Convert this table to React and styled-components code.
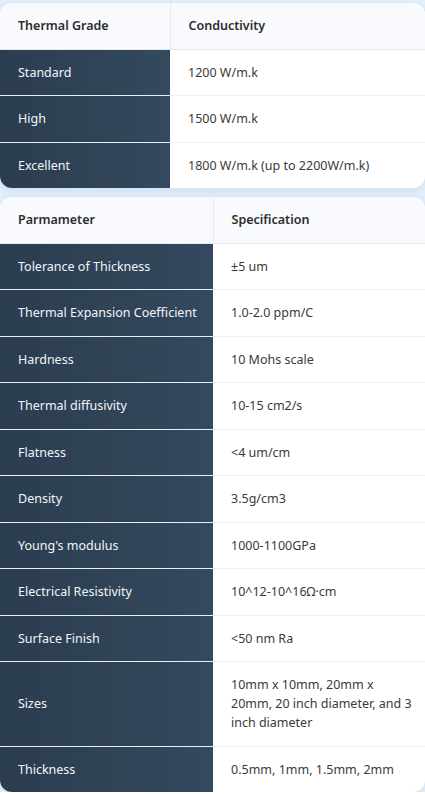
import React from "react";
import styled, { createGlobalStyle } from "styled-components";

const GlobalStyle = createGlobalStyle`
  body {
    margin: 0;
    background: #ffffff;
    font-family: "Segoe UI", "Noto Sans", "Open Sans", sans-serif;
  }
`;

const Page = styled.div`
  display: flex;
  flex-direction: column;
  gap: 9px;
  padding-top: 3px;
  background: #e6f0fb;
`;

const Card = styled.div`
  border-radius: 12px;
  overflow: hidden;
  background: #ffffff;
  box-shadow: 0 2px 10px rgba(70, 130, 200, 0.18);
`;

const Table = styled.table`
  width: 100%;
  border-collapse: collapse;
  table-layout: fixed;
  font-size: 12.5px;
  color: #333;

  th,
  td {
    box-sizing: border-box;
    padding: 13.25px 12px 13.25px 18px;
    line-height: 19px;
  }
`;

const HeadCell = styled.th`
  width: ${(p) => p.$width || "auto"};
  text-align: left;
  font-weight: 600;
  color: #2d2d2d;
  background: #f8fafd;
  border-bottom: 1px solid #e6e9ee;
  & + & {
    border-left: 1px solid #e6e9ee;
  }
`;

const LabelCell = styled.td`
  white-space: nowrap;
  color: #f2f5f8;
  font-weight: 400;
  background: linear-gradient(90deg, #2b3d50 0%, #34495e 100%);
  border-bottom: 1px solid #e8eef4;
`;

const ValueCell = styled.td`
  color: #3a3a3a;
  border-bottom: 1px solid #eceff3;
`;

const Row = styled.tr`
  &:last-child td {
    border-bottom: none;
  }
`;

const grades = [
  ["Standard", "1200 W/m.k"],
  ["High", "1500 W/m.k"],
  ["Excellent", "1800 W/m.k (up to 2200W/m.k)"],
];

const specs = [
  ["Tolerance of Thickness", "±5 um"],
  ["Thermal Expansion Coefficient", "1.0-2.0 ppm/C"],
  ["Hardness", "10 Mohs scale"],
  ["Thermal diffusivity", "10-15 cm2/s"],
  ["Flatness", "<4 um/cm"],
  ["Density", "3.5g/cm3"],
  ["Young's modulus", "1000-1100GPa"],
  ["Electrical Resistivity", "10^12-10^16Ω·cm"],
  ["Surface Finish", "<50 nm Ra"],
  ["Sizes", "10mm x 10mm, 20mm x 20mm, 20 inch diameter, and 3 inch diameter"],
  ["Thickness", "0.5mm, 1mm, 1.5mm, 2mm"],
];

const SpecTable = ({ head, rows, split }) => (
  <Card>
    <Table>
      <thead>
        <tr>
          <HeadCell $width={split}>{head[0]}</HeadCell>
          <HeadCell>{head[1]}</HeadCell>
        </tr>
      </thead>
      <tbody>
        {rows.map(([label, value]) => (
          <Row key={label}>
            <LabelCell>{label}</LabelCell>
            <ValueCell>{value}</ValueCell>
          </Row>
        ))}
      </tbody>
    </Table>
  </Card>
);

export default function App() {
  return (
    <>
      <GlobalStyle />
      <Page>
        <SpecTable head={["Thermal Grade", "Conductivity"]} rows={grades} split="170px" />
        <SpecTable head={["Parmameter", "Specification"]} rows={specs} split="213px" />
      </Page>
    </>
  );
}
